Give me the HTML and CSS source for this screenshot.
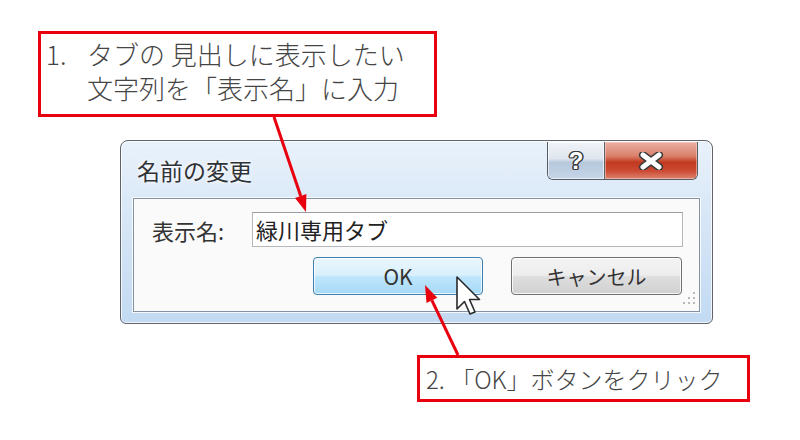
FILE: index.html
```html
<!DOCTYPE html>
<html lang="ja">
<head>
<meta charset="utf-8">
<title>名前の変更</title>
<link rel="stylesheet" href="styles.css">
</head>
<body>
<div class="stage">
  <div class="callout callout-1">
    <p class="line line-first"><span class="num">1.</span>タブの 見出しに表示したい</p>
    <p class="line">文字列を「表示名」に入力</p>
  </div>

  <div class="window">
    <div class="titlebar">
      <span class="title">名前の変更</span>
      <div class="caption-buttons">
        <span class="cap-btn help"><span class="qmark">?</span></span>
        <span class="cap-btn close">
          <svg width="26" height="18" viewBox="0 0 26 18">
            <path d="M5 3 L21 15 M21 3 L5 15" stroke="#3b3b3b" stroke-width="8" stroke-linecap="round" fill="none"/>
            <path d="M5 3 L21 15 M21 3 L5 15" stroke="#ffffff" stroke-width="5" stroke-linecap="round" fill="none"/>
          </svg>
        </span>
      </div>
    </div>
    <div class="panel">
      <div class="field-row">
        <span class="label">表示名:</span>
        <span class="textbox">緑川専用タブ</span>
      </div>
      <div class="button-row">
        <span class="btn btn-ok">OK</span>
        <span class="btn btn-cancel">キャンセル</span>
      </div>
      <svg class="grip" width="16" height="16" viewBox="0 0 16 16">
        <rect x="12" y="1" width="2" height="2" fill="#b9b9b9"/>
        <rect x="12" y="6" width="2" height="2" fill="#b9b9b9"/>
        <rect x="7" y="6" width="2" height="2" fill="#b9b9b9"/>
        <rect x="12" y="11" width="2" height="2" fill="#b9b9b9"/>
        <rect x="7" y="11" width="2" height="2" fill="#b9b9b9"/>
        <rect x="2" y="11" width="2" height="2" fill="#b9b9b9"/>
      </svg>
    </div>
  </div>

  <div class="callout callout-2">
    <p class="line">2. 「OK」ボタンをクリック</p>
  </div>

  <svg class="cursor" width="26" height="44" viewBox="0 0 26 44">
    <path d="M2 2 L2 34 L9.5 26.5 L15 39 L20 37 L14.5 24.5 L24.5 24.5 Z" fill="#ffffff" stroke="#2a2a2a" stroke-width="1.6" stroke-linejoin="round"/>
  </svg>

  <svg class="arrows" width="800" height="440" viewBox="0 0 800 440">
    <line x1="274" y1="117" x2="300.7" y2="195.9" stroke="#e8000f" stroke-width="3"/>
    <polygon points="306,212 295,197.9 306.4,193.9" fill="#e8000f"/>
    <line x1="458" y1="355" x2="431.9" y2="300.4" stroke="#e8000f" stroke-width="3"/>
    <polygon points="425,285 437.3,297.8 426.5,303" fill="#e8000f"/>
  </svg>
</div>
</body>
</html>
```

FILE: styles.css
```css
* { box-sizing: border-box; }

html, body {
  margin: 0;
  padding: 0;
  background: #ffffff;
}

body {
  font-family: "Noto Sans CJK JP", "Noto Sans", sans-serif;
  color: #333333;
}

.stage {
  position: relative;
  width: 800px;
  height: 440px;
  overflow: hidden;
  background: #ffffff;
  padding-top: 31px;
}

/* callouts */
.callout {
  border: 3px solid #e8000f;
  background: #ffffff;
}

.callout .line {
  margin: 0;
  white-space: nowrap;
  color: #454545;
  font-weight: 300;
}

.callout-1 {
  width: 399px;
  height: 86px;
  margin-left: 38px;
  padding: 3px 0 0 46px;
  font-size: 26px;
  line-height: 34px;
}

.callout-1 .line-first {
  text-indent: -41px;
}

.callout-1 .num {
  display: inline-block;
  width: 41px;
  text-indent: 0;
}

.callout-2 {
  width: 333px;
  height: 47px;
  margin-left: 417px;
  margin-top: 31px;
  padding: 4px 0 0 6px;
  font-size: 24px;
  line-height: 34px;
}

/* dialog window */
.window {
  width: 593px;
  height: 184px;
  margin-left: 120px;
  margin-top: 23px;
  border: 1px solid #5f646b;
  border-radius: 8px 8px 6px 6px;
  background: linear-gradient(180deg, #e9f2fb 0%, #dae8f7 35%, #cde0f4 70%, #c2daf2 100%);
  box-shadow: inset 0 0 0 1px rgba(255, 255, 255, 0.75);
  display: flex;
  flex-direction: column;
}

.titlebar {
  height: 57px;
  display: flex;
  align-items: center;
  justify-content: space-between;
  padding: 0 14px 0 16px;
}

.title {
  font-size: 23px;
  color: #2f3338;
  text-shadow: 0 0 6px #ffffff, 0 0 3px #ffffff;
  margin-top: 1px;
}

.caption-buttons {
  align-self: flex-start;
  margin-top: 1px;
  display: flex;
  height: 38px;
  border: 1px solid #555c66;
  border-top: none;
  border-radius: 0 0 6px 6px;
  overflow: hidden;
}

.cap-btn {
  display: flex;
  align-items: center;
  justify-content: center;
  height: 100%;
}

.cap-btn.help {
  width: 57px;
  border-right: 1px solid #5b626c;
  background: linear-gradient(180deg, #f1f4f8 0%, #dfe6ee 45%, #b7c8dd 55%, #c6d5e7 100%);
  box-shadow: inset 0 0 0 1px rgba(255, 255, 255, 0.6);
}

.qmark {
  font-family: "Liberation Sans", sans-serif;
  font-weight: bold;
  font-size: 24px;
  line-height: 1;
  color: #ffffff;
  text-shadow:
    1px 0 0 #3b3b3b, -1px 0 0 #3b3b3b, 0 1px 0 #3b3b3b, 0 -1px 0 #3b3b3b,
    1px 1px 0 #3b3b3b, -1px -1px 0 #3b3b3b, 1px -1px 0 #3b3b3b, -1px 1px 0 #3b3b3b,
    1.5px 0 0 #3b3b3b, -1.5px 0 0 #3b3b3b;
}

.cap-btn.close {
  width: 92px;
  background: linear-gradient(180deg, #eab0a2 0%, #d9806b 38%, #c2391f 55%, #cc4a33 78%, #de8471 100%);
  box-shadow: inset 0 0 0 1px rgba(255, 220, 210, 0.5);
}

/* content panel */
.panel {
  position: relative;
  height: 114px;
  margin: 0 12px;
  border: 1px solid #8592a2;
  background: #fafafa;
  box-shadow: 0 0 0 1px rgba(255, 255, 255, 0.8);
  padding: 13px 16px 0 18px;
}

.field-row {
  display: flex;
  align-items: center;
  height: 35px;
}

.label {
  width: 100px;
  font-size: 22px;
  color: #333333;
}

.textbox {
  flex: 1;
  height: 35px;
  border: 1px solid #b5b7bd;
  border-top-color: #9a9ca2;
  background: #ffffff;
  font-size: 22px;
  line-height: 32px;
  padding-left: 3px;
  color: #222222;
}

.button-row {
  display: flex;
  justify-content: flex-end;
  gap: 28px;
  margin-top: 10px;
  padding-right: 1px;
}

.btn {
  display: flex;
  align-items: center;
  justify-content: center;
  height: 38px;
  border-radius: 4px;
  font-size: 20px;
  color: #333333;
}

.btn-ok {
  width: 170px;
  border: 1px solid #3c7fb1;
  background: linear-gradient(180deg, #eaf6fd 0%, #d9f0fc 48%, #bee6fd 52%, #a7d9f5 100%);
  box-shadow: inset 0 0 0 1px rgba(255, 255, 255, 0.75);
  font-size: 21px;
}

.btn-cancel {
  width: 171px;
  border: 1px solid #707070;
  background: linear-gradient(180deg, #f4f4f4 0%, #ececec 48%, #dedede 52%, #d0d0d0 100%);
  box-shadow: inset 0 0 0 1px rgba(255, 255, 255, 0.8);
}

.grip {
  position: absolute;
  right: 2px;
  bottom: 4px;
}

/* overlays */
.cursor {
  position: absolute;
  left: 455px;
  top: 275px;
}

.arrows {
  position: absolute;
  left: 0;
  top: 0;
  pointer-events: none;
}
```
